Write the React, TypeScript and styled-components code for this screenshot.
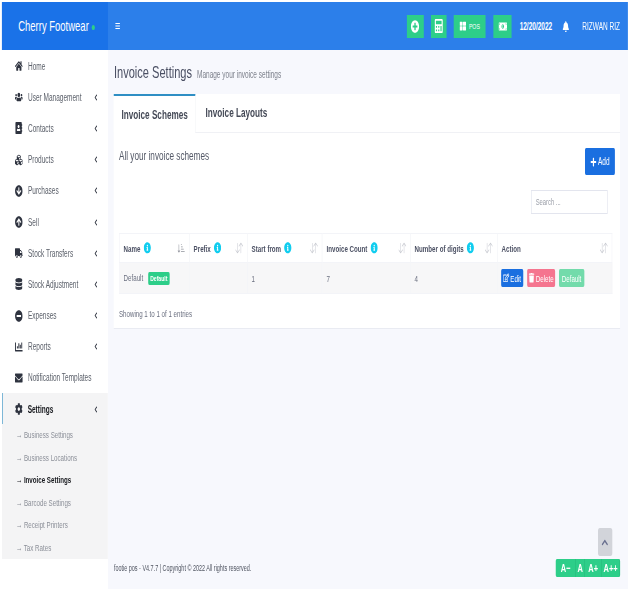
import React from "react";
import styled, { createGlobalStyle } from "styled-components";
import {
  FaAddressBook,
  FaArrowCircleDown,
  FaArrowCircleUp,
  FaBars,
  FaBell,
  FaCalculator,
  FaChartBar,
  FaChevronLeft,
  FaChevronUp,
  FaCog,
  FaCubes,
  FaDatabase,
  FaEnvelope,
  FaHome,
  FaInfoCircle,
  FaMinusCircle,
  FaMoneyBillAlt,
  FaPlus,
  FaPlusCircle,
  FaRegEdit,
  FaThLarge,
  FaTrash,
  FaTruck,
  FaUsers,
} from "react-icons/fa";
import { BsArrowDownUp, BsSortDownAlt } from "react-icons/bs";

// the whole page is drawn narrow, so widths are written in picture pixels
const SQUEEZE = 0.65;
const w = (n: number) => `${n / SQUEEZE}px`;

const GlobalStyle = createGlobalStyle`
  html, body {
    margin: 0;
    height: 100%;
    overflow: hidden;
    background: #ffffff;
  }
  body {
    font-family: "Liberation Sans", Arial, sans-serif;
    color: #5c6170;
  }
  * {
    box-sizing: border-box;
  }
`;

const Page = styled.div`
  width: ${w(628)};
  height: 589px;
  padding: 2px 0 0 ${w(2)};
  transform: scaleX(${SQUEEZE});
  transform-origin: left top;
  display: flex;
  flex-direction: column;
`;

const Header = styled.header`
  height: 48px;
  display: flex;
  align-items: center;
  background: #2c7fea;
  color: #ffffff;
  flex-shrink: 0;
`;

const Brand = styled.div`
  width: ${w(106)};
  height: 100%;
  background: #1a72e8;
  display: flex;
  align-items: center;
  justify-content: center;
  gap: ${w(3)};
  font-size: 14.6px;
  padding-left: ${w(3)};
`;

const OnlineDot = styled.span`
  width: ${w(3)};
  height: 5px;
  border-radius: 50%;
  background: #2dce89;
  margin-top: 2px;
`;

const Toggle = styled.span`
  margin-left: ${w(7)};
  font-size: 8px;
  display: flex;
`;

const HeaderTools = styled.div`
  margin-left: auto;
  display: flex;
  align-items: center;
  height: 100%;
  padding-right: ${w(8)};
`;

const ToolButton = styled.span<{ $width: number; $gap: number; $icon?: number }>`
  width: ${(p) => w(p.$width)};
  margin-right: ${(p) => w(p.$gap)};
  height: 23px;
  background: #2dce89;
  display: flex;
  align-items: center;
  justify-content: center;
  gap: ${w(3)};
  font-size: 8px;
  color: #ffffff;
  svg {
    font-size: ${(p) => p.$icon ?? 12}px;
  }
`;

const HeaderDate = styled.span`
  font-size: 10px;
  font-weight: bold;
  margin-right: ${w(10)};
`;

const BellWrap = styled.span`
  display: flex;
  font-size: 11px;
  margin-right: ${w(13)};
`;

const UserName = styled.span`
  font-size: 10px;
`;

const Body = styled.div`
  flex: 1;
  display: flex;
  min-height: 0;
`;

const Sidebar = styled.nav`
  width: ${w(106)};
  flex-shrink: 0;
  background: #ffffff;
  color: #333a45;
`;

const MenuItem = styled.div<{ $active?: boolean }>`
  height: 31.2px;
  display: flex;
  align-items: center;
  padding-top: 1px;
  padding-left: ${(p) => w(p.$active ? 12 : 13)};
  padding-right: ${w(10)};
  font-size: 10px;
  color: ${(p) => (p.$active ? "#16181d" : "#5a5f69")};
  font-weight: ${(p) => (p.$active ? "bold" : "normal")};
  background: ${(p) => (p.$active ? "#f4f4f5" : "transparent")};
  border-left: ${(p) => (p.$active ? `${w(1)} solid #2f8fc4` : "none")};
`;

const MenuIcon = styled.span`
  width: ${w(13)};
  font-size: 12px;
  color: #2f3440;
  display: flex;
`;

const MenuLabel = styled.span`
  flex: 1;
  white-space: nowrap;
`;

const Caret = styled.span`
  font-size: 7px;
  color: #2f3440;
  display: flex;
`;

const SubMenu = styled.div`
  background: #f4f4f5;
  padding-left: ${w(14)};
  height: 135px;
`;

const SubItem = styled.div<{ $current?: boolean }>`
  height: 22.5px;
  display: flex;
  align-items: center;
  padding-bottom: 2px;
  font-size: 9.5px;
  white-space: nowrap;
  font-weight: ${(p) => (p.$current ? "bold" : "normal")};
  color: ${(p) => (p.$current ? "#16181d" : "#8b8f98")};
`;

const Main = styled.main`
  flex: 1;
  min-width: 0;
  background: #f7f8fd;
  padding: 0 ${w(8)} 0 ${w(6)};
  display: flex;
  flex-direction: column;
`;

const TitleRow = styled.div`
  height: 44px;
  display: flex;
  align-items: center;
  gap: ${w(5)};
  padding-top: 2px;
`;

const PageTitle = styled.h1`
  margin: 0;
  font-size: 17px;
  font-weight: normal;
  color: #4a4f63;
`;

const PageSub = styled.span`
  font-size: 10px;
  color: #7d818c;
  padding-top: 3px;
`;

const Card = styled.section`
  background: #ffffff;
  height: 235px;
  border-bottom: 1px solid #e9ebf2;
`;

const Tabs = styled.div`
  height: 39px;
  display: flex;
  border-bottom: 1px solid #f0f1f5;
`;

const Tab = styled.div<{ $active?: boolean }>`
  width: ${(p) => w(p.$active ? 82 : 81)};
  height: ${(p) => (p.$active ? "39px" : "38px")};
  display: flex;
  align-items: center;
  justify-content: center;
  font-size: 12.6px;
  font-weight: bold;
  color: #454a57;
  border-top: ${(p) => (p.$active ? "2px solid #2f8fc4" : "none")};
  border-right: ${(p) => (p.$active ? `${w(1)} solid #f0f1f5` : "none")};
  background: #ffffff;
`;

const CardBody = styled.div`
  padding: 15px ${w(8)} 0 ${w(5)};
`;

const BoxHead = styled.div`
  display: flex;
  justify-content: space-between;
  align-items: flex-start;
  margin-right: ${w(-3)};
`;

const BoxTitle = styled.h3`
  margin: 1px 0 0;
  font-size: 12.6px;
  font-weight: normal;
  color: #555a68;
`;

const AddButton = styled.button`
  width: ${w(30)};
  height: 27px;
  border: none;
  border-radius: 2px;
  background: #1a6fe0;
  color: #ffffff;
  font: 10px "Liberation Sans", Arial, sans-serif;
  display: flex;
  align-items: center;
  justify-content: center;
  gap: ${w(1)};
  padding: 0;
  svg {
    font-size: 10px;
  }
`;

const SearchRow = styled.div`
  display: flex;
  justify-content: flex-end;
  margin-top: 15px;
  padding-right: ${w(4)};
`;

const SearchInput = styled.input`
  width: ${w(77)};
  height: 24px;
  border: 1px solid #e3e5ee;
  background: #ffffff;
  padding: 0 ${w(4)};
  font: 9px "Liberation Sans", Arial, sans-serif;
  outline: none;
  &::placeholder {
    color: #9a9ea8;
  }
`;

const Table = styled.table`
  width: ${w(493)};
  table-layout: fixed;
  border-collapse: collapse;
  margin-top: 19px;
`;

const Th = styled.th<{ $width: number }>`
  width: ${(p) => w(p.$width)};
  height: 29px;
  padding: 0 ${w(4)};
  border: 1px solid #f3f4f8;
  text-align: left;
  font-size: 9.5px;
  font-weight: bold;
  color: #4b5063;
  white-space: nowrap;
`;

const ThInner = styled.div`
  display: flex;
  align-items: center;
  gap: ${w(3)};
`;

const InfoIcon = styled(FaInfoCircle)`
  color: #11cdef;
  font-size: 11.5px;
`;

const SortSlot = styled.span<{ $dark?: boolean }>`
  margin-left: auto;
  display: flex;
  font-size: 12px;
  color: ${(p) => (p.$dark ? "#8f929b" : "#c8cad1")};
`;

const Td = styled.td`
  height: 31px;
  padding: 0 ${w(4)};
  background: #f7f7f8;
  border: 1px solid #f3f4f8;
  font-size: 9.5px;
  color: #6b7080;
  white-space: nowrap;
`;

const Badge = styled.span`
  display: inline-block;
  margin-left: ${w(5)};
  padding: 2px ${w(2)};
  border-radius: 2px;
  background: #2dce89;
  color: #ffffff;
  font-size: 7.8px;
  font-weight: bold;
`;

const Actions = styled.div`
  display: flex;
  gap: ${w(4)};
  margin-left: ${w(-0.5)};
`;

const ActionButton = styled.span<{ $bg: string; $width: number }>`
  width: ${(p) => w(p.$width)};
  height: 18px;
  border-radius: 2px;
  background: ${(p) => p.$bg};
  color: #ffffff;
  font-size: 9.5px;
  display: flex;
  align-items: center;
  justify-content: center;
  gap: ${w(1)};
`;

const Showing = styled.div`
  margin-top: 14px;
  font-size: 9.5px;
  color: #6b7080;
`;

const Footer = styled.footer`
  margin-top: auto;
  display: flex;
  align-items: center;
  justify-content: space-between;
  padding-bottom: 12px;
  position: relative;
  font-size: 8.4px;
  color: #4f5460;
`;

const ScrollTop = styled.span`
  position: absolute;
  right: ${w(8)};
  bottom: 33px;
  width: ${w(14)};
  height: 28px;
  border-radius: 3px;
  background: #d2d4da;
  color: #6a7090;
  display: flex;
  align-items: center;
  justify-content: center;
  font-size: 11px;
`;

const FontSizer = styled.div`
  display: flex;
  height: 18px;
  border-radius: 2px;
  overflow: hidden;
  background: #2dce89;
`;

const FontStep = styled.span<{ $width: number }>`
  width: ${(p) => w(p.$width)};
  display: flex;
  align-items: center;
  justify-content: center;
  color: #ffffff;
  font-size: 11.5px;
  font-weight: bold;
  border-right: ${w(0.5)} solid #28bd7d;
  white-space: nowrap;
`;

const menu = [
  { label: "Home", icon: <FaHome /> },
  { label: "User Management", icon: <FaUsers />, caret: true },
  { label: "Contacts", icon: <FaAddressBook />, caret: true },
  { label: "Products", icon: <FaCubes />, caret: true },
  { label: "Purchases", icon: <FaArrowCircleDown />, caret: true },
  { label: "Sell", icon: <FaArrowCircleUp />, caret: true },
  { label: "Stock Transfers", icon: <FaTruck />, caret: true },
  { label: "Stock Adjustment", icon: <FaDatabase />, caret: true },
  { label: "Expenses", icon: <FaMinusCircle />, caret: true },
  { label: "Reports", icon: <FaChartBar />, caret: true },
  { label: "Notification Templates", icon: <FaEnvelope /> },
];

const subMenu = [
  "Business Settings",
  "Business Locations",
  "Invoice Settings",
  "Barcode Settings",
  "Receipt Printers",
  "Tax Rates",
];

const columns = [
  { label: "Name", width: 70, info: true, dark: true },
  { label: "Prefix", width: 58, info: true },
  { label: "Start from", width: 75, info: true },
  { label: "Invoice Count", width: 88, info: true },
  { label: "Number of digits", width: 87, info: true },
  { label: "Action", width: 115 },
];

const App: React.FC = () => {
  return (
    <>
      <GlobalStyle />
      <Page>
        <Header>
          <Brand>
            Cherry Footwear
            <OnlineDot />
          </Brand>
          <Toggle>
            <FaBars />
          </Toggle>
          <HeaderTools>
            <ToolButton $width={17} $gap={7} $icon={13}>
              <FaPlusCircle />
            </ToolButton>
            <ToolButton $width={16} $gap={7} $icon={14}>
              <FaCalculator />
            </ToolButton>
            <ToolButton $width={32} $gap={8} $icon={10}>
              <FaThLarge />
              POS
            </ToolButton>
            <ToolButton $width={18} $gap={8} $icon={13}>
              <FaMoneyBillAlt />
            </ToolButton>
            <HeaderDate>12/20/2022</HeaderDate>
            <BellWrap>
              <FaBell />
            </BellWrap>
            <UserName>RIZWAN RIZ</UserName>
          </HeaderTools>
        </Header>
        <Body>
          <Sidebar>
            {menu.map((item) => (
              <MenuItem key={item.label}>
                <MenuIcon>{item.icon}</MenuIcon>
                <MenuLabel>{item.label}</MenuLabel>
                {item.caret && (
                  <Caret>
                    <FaChevronLeft />
                  </Caret>
                )}
              </MenuItem>
            ))}
            <MenuItem $active>
              <MenuIcon>
                <FaCog />
              </MenuIcon>
              <MenuLabel>Settings</MenuLabel>
              <Caret>
                <FaChevronLeft />
              </Caret>
            </MenuItem>
            <SubMenu>
              {subMenu.map((name) => (
                <SubItem key={name} $current={name === "Invoice Settings"}>
                  → {name}
                </SubItem>
              ))}
            </SubMenu>
          </Sidebar>
          <Main>
            <TitleRow>
              <PageTitle>Invoice Settings</PageTitle>
              <PageSub>Manage your invoice settings</PageSub>
            </TitleRow>
            <Card>
              <Tabs>
                <Tab $active>Invoice Schemes</Tab>
                <Tab>Invoice Layouts</Tab>
              </Tabs>
              <CardBody>
                <BoxHead>
                  <BoxTitle>All your invoice schemes</BoxTitle>
                  <AddButton>
                    <FaPlus />
                    Add
                  </AddButton>
                </BoxHead>
                <SearchRow>
                  <SearchInput placeholder="Search ..." />
                </SearchRow>
                <Table>
                  <thead>
                    <tr>
                      {columns.map((col) => (
                        <Th key={col.label} $width={col.width}>
                          <ThInner>
                            {col.label}
                            {col.info && <InfoIcon />}
                            <SortSlot $dark={col.dark}>
                              {col.dark ? <BsSortDownAlt /> : <BsArrowDownUp />}
                            </SortSlot>
                          </ThInner>
                        </Th>
                      ))}
                    </tr>
                  </thead>
                  <tbody>
                    <tr>
                      <Td>
                        Default
                        <Badge>Default</Badge>
                      </Td>
                      <Td />
                      <Td>1</Td>
                      <Td>7</Td>
                      <Td>4</Td>
                      <Td>
                        <Actions>
                          <ActionButton $bg="#1a6fe0" $width={22}>
                            <FaRegEdit />
                            Edit
                          </ActionButton>
                          <ActionButton $bg="#f5758f" $width={28}>
                            <FaTrash />
                            Delete
                          </ActionButton>
                          <ActionButton $bg="#73dbab" $width={25}>
                            Default
                          </ActionButton>
                        </Actions>
                      </Td>
                    </tr>
                  </tbody>
                </Table>
                <Showing>Showing 1 to 1 of 1 entries</Showing>
              </CardBody>
            </Card>
            <Footer>
              <span>footie pos - V4.7.7 | Copyright © 2022 All rights reserved.</span>
              <ScrollTop>
                <FaChevronUp />
              </ScrollTop>
              <FontSizer>
                <FontStep $width={20}>A−</FontStep>
                <FontStep $width={9}>A</FontStep>
                <FontStep $width={17}>A+</FontStep>
                <FontStep $width={18}>A++</FontStep>
              </FontSizer>
            </Footer>
          </Main>
        </Body>
      </Page>
    </>
  );
};

export default App;
